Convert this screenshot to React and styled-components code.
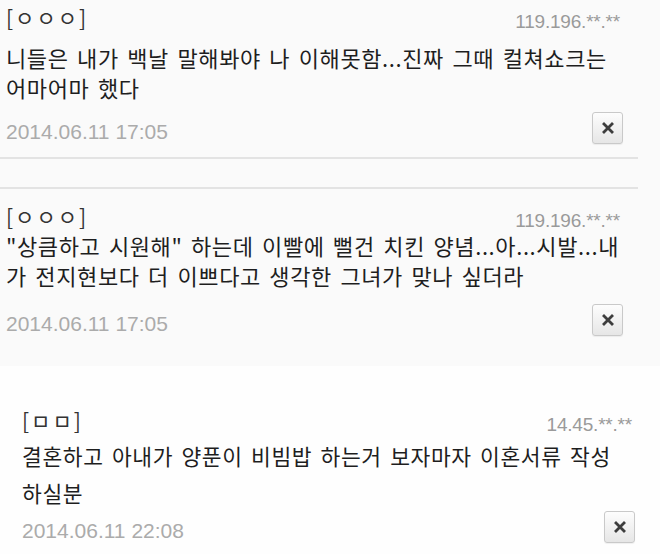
import React from "react";
import styled, { createGlobalStyle } from "styled-components";

const GlobalStyle = createGlobalStyle`
  html, body {
    margin: 0;
    padding: 0;
    background: #fafafa;
  }
  body {
    font-family: "Noto Sans CJK KR", "Liberation Sans", sans-serif;
    color: #222;
  }
`;

const Page = styled.div`
  width: 660px;
  height: 554px;
  overflow: hidden;
  display: flex;
  flex-direction: column;
`;

const Card = styled.div`
  width: ${(p) => p.$width}px;
  margin-left: ${(p) => p.$indent}px;
  margin-top: ${(p) => p.$gap}px;
  padding: ${(p) => p.$padTop}px 15px ${(p) => p.$padBottom}px 6px;
  box-sizing: border-box;
  border-top: ${(p) => (p.$lineTop ? "2px solid #e3e3e3" : "none")};
  border-bottom: ${(p) => (p.$lineBottom ? "2px solid #e3e3e3" : "none")};
`;

const Plain = styled.div`
  background: #fefefe;
  flex: 1;
`;

const Header = styled.div`
  display: flex;
  justify-content: space-between;
  align-items: flex-end;
  height: 24px;
`;

const Name = styled.span`
  font-size: 21px;
  line-height: 24px;
  color: #333;
  letter-spacing: 2px;
`;

const Ip = styled.span`
  font-family: "Liberation Sans", sans-serif;
  font-size: 19px;
  line-height: 18px;
  color: #9a9a9a;
  margin-right: 3px;
  margin-bottom: -2px;
  letter-spacing: -0.2px;
`;

const Body = styled.p`
  margin: ${(p) => p.$top}px 0 0;
  font-size: ${(p) => p.$size}px;
  line-height: ${(p) => p.$lead}px;
  color: #1e1e1e;
  letter-spacing: 0.6px;
  word-spacing: 3px;
  white-space: nowrap;
`;

const Footer = styled.div`
  display: flex;
  justify-content: space-between;
  align-items: flex-end;
  margin-top: ${(p) => p.$top}px;
`;

const Date = styled.span`
  font-family: "Liberation Sans", sans-serif;
  font-size: 21px;
  line-height: 24px;
  color: #ababab;
`;

const CloseButton = styled.button`
  width: 31px;
  height: 32px;
  padding: 0;
  display: flex;
  align-items: center;
  justify-content: center;
  border: 1px solid #c9c9c9;
  border-radius: 3px;
  background: linear-gradient(#fdfdfd, #e6e6e6);
  box-shadow: 0 1px 1px rgba(0, 0, 0, 0.06);
`;

const comments = [
  {
    name: "[ㅇㅇㅇ]",
    ip: "119.196.**.**",
    lines: ["니들은 내가 백날 말해봐야 나 이해못함...진짜 그때 컬쳐쇼크는", "어마어마 했다"],
    date: "2014.06.11 17:05",
  },
  {
    name: "[ㅇㅇㅇ]",
    ip: "119.196.**.**",
    lines: [
      "\"상큼하고 시원해\" 하는데 이빨에 뻘건 치킨 양념...아...시발...내",
      "가 전지현보다 더 이쁘다고 생각한 그녀가 맞나 싶더라",
    ],
    date: "2014.06.11 17:05",
  },
  {
    name: "[ㅁㅁ]",
    ip: "14.45.**.**",
    lines: ["결혼하고 아내가 양푼이 비빔밥 하는거 보자마자 이혼서류 작성", "하실분"],
    date: "2014.06.11 22:08",
  },
];

function CloseIcon() {
  return (
    <svg width="12" height="12" viewBox="0 0 12 12">
      <path d="M2 2 L10 10 M10 2 L2 10" stroke="#3d3d3d" strokeWidth="2.8" strokeLinecap="square" />
    </svg>
  );
}

function Comment({ c, bodyTop, size, lead, footTop }) {
  return (
    <>
      <Header>
        <Name>{c.name}</Name>
        <Ip>{c.ip}</Ip>
      </Header>
      <Body $top={bodyTop} $size={size} $lead={lead}>
        {c.lines.map((line, i) => (
          <React.Fragment key={i}>
            {i > 0 && <br />}
            {line}
          </React.Fragment>
        ))}
      </Body>
      <Footer $top={footTop}>
        <Date>{c.date}</Date>
        <CloseButton aria-label="삭제">
          <CloseIcon />
        </CloseButton>
      </Footer>
    </>
  );
}

export default function App() {
  return (
    <Page>
      <GlobalStyle />
      <Card $indent={0} $width={638} $gap={0} $padTop={5} $padBottom={13} $lineBottom>
        <Comment c={comments[0]} bodyTop={13} size={22} lead={30} footTop={10} />
      </Card>
      <Card $indent={0} $width={638} $gap={28} $padTop={15} $padBottom={30} $lineTop>
        <Comment c={comments[1]} bodyTop={2} size={22} lead={30} footTop={14} />
      </Card>
      <Plain>
        <Card $indent={16} $width={634} $gap={0} $padTop={42} $padBottom={0}>
          <Comment c={comments[2]} bodyTop={5} size={21.5} lead={37} footTop={0} />
        </Card>
      </Plain>
    </Page>
  );
}
